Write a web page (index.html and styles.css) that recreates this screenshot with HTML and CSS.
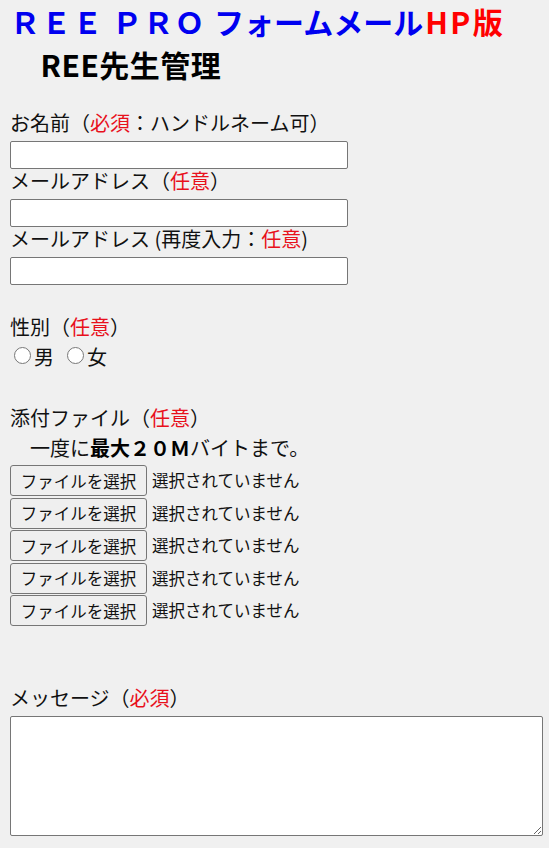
FILE: index.html
```html
<!DOCTYPE html>
<html lang="ja">
	<head>
		<meta charset="UTF-8">
		<title>REE PRO フォームメール</title>
		<link rel="stylesheet" href="styles.css">
	</head>
	<body>
		<form class="mail-form">
			<h1 class="title"><span class="blue"><span class="latin">ＲＥＥ ＰＲＯ </span>フォームメール</span><span class="red">HP版</span><br>　REE先生管理</h1>

			<div class="label">お名前（<span class="req">必須</span>：ハンドルネーム可）</div>
			<input type="text" class="text">
			<div class="label">メールアドレス（<span class="req">任意</span>）</div>
			<input type="text" class="text">
			<div class="label">メールアドレス (再度入力：<span class="req">任意</span>)</div>
			<input type="text" class="text">

			<div class="label sex">性別（<span class="req">任意</span>）</div>
			<div class="radios">
				<label><input type="radio" name="sex">男</label>
				<label><input type="radio" name="sex">女</label>
			</div>

			<div class="label attach">添付ファイル（<span class="req">任意</span>）</div>
			<div class="note">　一度に<b>最大２０Ｍ</b>バイトまで。</div>
			<div class="file"><button type="button">ファイルを選択</button><span>選択されていません</span></div>
			<div class="file"><button type="button">ファイルを選択</button><span>選択されていません</span></div>
			<div class="file"><button type="button">ファイルを選択</button><span>選択されていません</span></div>
			<div class="file"><button type="button">ファイルを選択</button><span>選択されていません</span></div>
			<div class="file"><button type="button">ファイルを選択</button><span>選択されていません</span></div>

			<div class="label message">メッセージ（<span class="req">必須</span>）</div>
			<textarea class="body"></textarea>
		</form>
	</body>
</html>
```

FILE: styles.css
```css
*{
	margin: 0;
	padding: 0;
}
body{
	background: #f0f0f0;
	color: #111;
	font-family: "Noto Sans CJK JP", sans-serif;
	font-size: 20px;
	padding: 0 10px;
}
.title{
	font-size: 30px;
	line-height: 43px;
	margin: 0 0 25px;
	color: #000;
	letter-spacing: 0.5px;
}
.title .blue{
	color: #0000f0;
	letter-spacing: 0;
}
.title .latin{
	letter-spacing: 1.3px;
}
.title .red{
	color: #f00;
	letter-spacing: 2.5px;
	margin-left: 2px;
}
.label{
	line-height: 24px;
	margin-bottom: 6px;
}
.req{
	color: #e8101c;
}
.text{
	display: block;
	width: 338px;
	height: 28px;
	box-sizing: border-box;
	border: 1px solid #767676;
	border-radius: 2px;
	background: #fff;
	padding: 1px 2px;
	font: 16px "Noto Sans CJK JP", sans-serif;
}
.sex{
	margin-top: 30px;
}
.radios{
	display: flex;
	line-height: 24px;
}
.radios label{
	display: flex;
	align-items: flex-start;
}
.radios label + label{
	margin-left: 9px;
}
.radios input{
	width: 17px;
	height: 17px;
	margin: 2px 3px 0 4px;
}
.attach{
	margin-top: 37px;
}
.note{
	line-height: 24px;
	margin-bottom: 5px;
}
.note b{
	color: #000;
}
.file{
	display: flex;
	align-items: flex-start;
	height: 32.5px;
	font-size: 16.5px;
}
.file button{
	width: 137px;
	height: 31px;
	box-sizing: border-box;
	border: 1px solid #767676;
	border-radius: 3px;
	background: #efefef;
	color: #111;
	font: 16.5px "Noto Sans CJK JP", sans-serif;
}
.file span{
	margin-left: 5px;
	line-height: 31px;
}
.message{
	margin-top: 58px;
}
.body{
	display: block;
	width: 533px;
	height: 120px;
	box-sizing: border-box;
	border: 1px solid #767676;
	border-radius: 2px;
	background: #fff;
}
```
